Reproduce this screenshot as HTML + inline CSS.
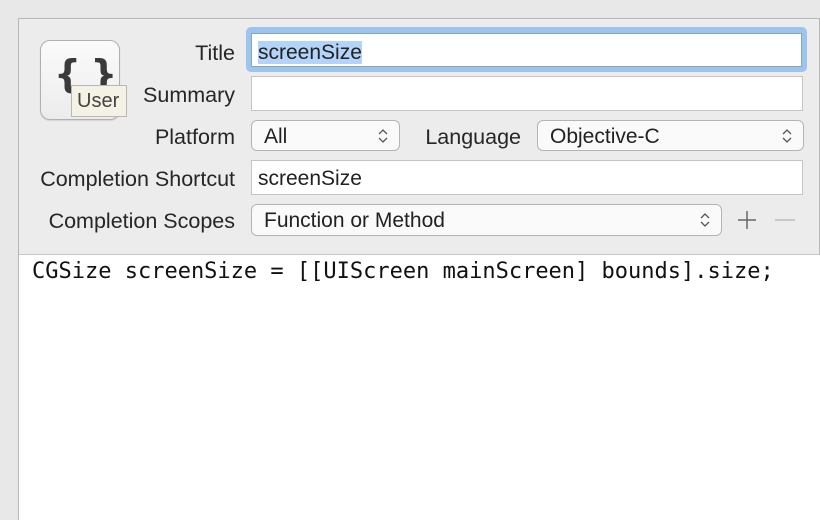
<!DOCTYPE html>
<html><head><meta charset="utf-8"><style>
*{margin:0;padding:0;box-sizing:border-box}
body{width:820px;height:520px;background:#e8e8e8;position:relative;overflow:hidden;font-family:"Liberation Sans",sans-serif;color:#222}
.panel{position:absolute;left:18px;top:18px;width:802px;height:502px;border:1px solid #b8b8b8;background:#ececec}
.lbl{position:absolute;right:585px;font-size:21.5px;color:#262626;white-space:nowrap;text-align:right}
.fld{position:absolute;background:#fff;border:1px solid #c4c4c4;font-size:21px;padding-left:6px;padding-top:2px;line-height:34px}
.pop{position:absolute;background:#fafafa;border:1px solid #b4b4b4;border-radius:6px;font-size:21px;padding-left:12px;padding-top:1px;line-height:30px;color:#222}
.pop svg{position:absolute;right:10px;top:6px}
.code{position:absolute;left:19px;top:254px;width:801px;height:266px;background:#fff;border-top:1px solid #c8c8c8;font-family:"DejaVu Sans Mono","Liberation Mono",monospace;font-size:22px;padding:4px 0 0 13px;color:#111}
</style></head><body>
<div class="panel"></div>
<div style="position:absolute;left:40px;top:40px;width:80px;height:80px;border:1px solid #b0b0b0;border-radius:10px;background:linear-gradient(#fbfbfb,#ececec);box-shadow:0 1px 1px rgba(0,0,0,.1)"></div>
<div style="position:absolute;left:54px;top:52px;font-family:'DejaVu Sans',sans-serif;font-weight:bold;font-size:38px;color:#3a3a3a;letter-spacing:-2px">{ }</div>
<div style="position:absolute;left:71px;top:85px;width:56px;height:32px;background:#f4f2e4;border:1px solid #b8b8b0;font-size:20px;color:#444;padding-left:5px;line-height:30px">User</div>

<div class="lbl" style="top:41px">Title</div>
<div class="lbl" style="top:83px">Summary</div>
<div class="lbl" style="top:125px">Platform</div>
<div class="lbl" style="top:167px">Completion Shortcut</div>
<div class="lbl" style="top:209px">Completion Scopes</div>
<div class="lbl" style="top:125px;right:299px">Language</div>

<div style="position:absolute;left:246px;top:27px;width:561px;height:45px;border-radius:5px;background:#9cc4ee"></div>
<div class="fld" style="left:251px;top:33px;width:551px;height:34px;border-color:#8aa"><span style="background:#b3d4f8">screenSize</span></div>
<div class="fld" style="left:251px;top:76px;width:552px;height:35px"></div>
<div class="pop" style="left:251px;top:120px;width:149px;height:31px">All<svg width="12" height="18" viewBox="0 0 12 18"><path d="M2 7L6 3L10 7M2 11L6 15L10 11" fill="none" stroke="#555" stroke-width="1.3"/></svg></div>
<div class="pop" style="left:537px;top:120px;width:267px;height:31px">Objective-C<svg width="12" height="18" viewBox="0 0 12 18"><path d="M2 7L6 3L10 7M2 11L6 15L10 11" fill="none" stroke="#555" stroke-width="1.3"/></svg></div>
<div class="fld" style="left:251px;top:160px;width:552px;height:35px;line-height:32px">screenSize</div>
<div class="pop" style="left:251px;top:204px;width:471px;height:32px">Function or Method<svg width="12" height="18" viewBox="0 0 12 18"><path d="M2 7L6 3L10 7M2 11L6 15L10 11" fill="none" stroke="#555" stroke-width="1.3"/></svg></div>
<svg style="position:absolute;left:737px;top:210px" width="60" height="20"><path d="M10 1V19M1 10H19" stroke="#666" stroke-width="1.5"/><path d="M38 10H58" stroke="#bbb" stroke-width="1.5"/></svg>
<div class="code">CGSize screenSize = [[UIScreen mainScreen] bounds].size;</div>
</body></html>
